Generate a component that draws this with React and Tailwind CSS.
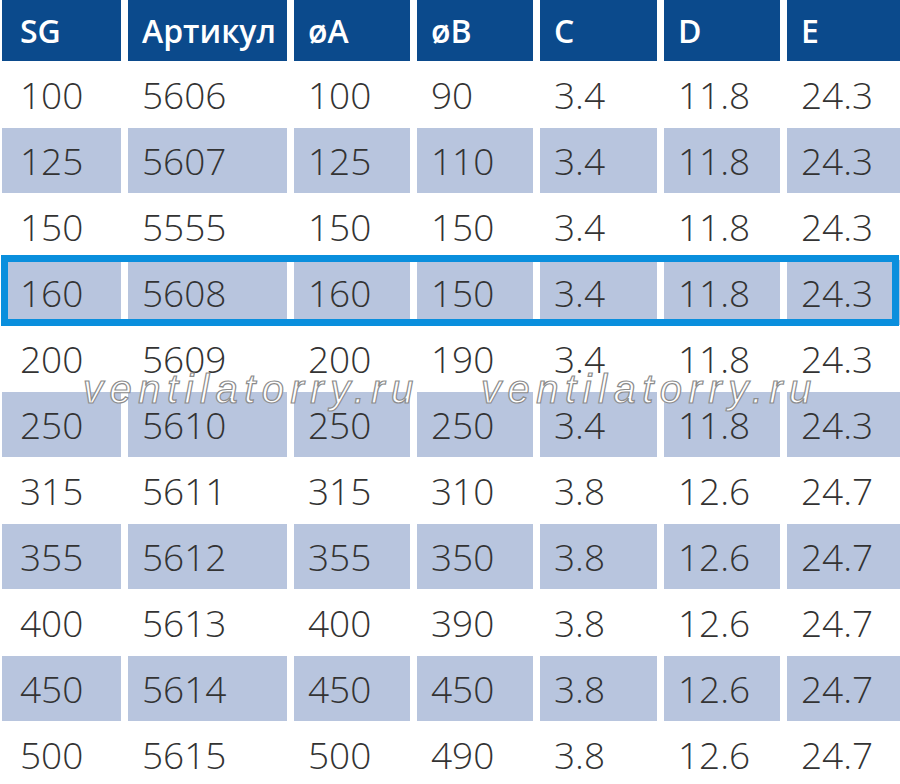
const HEAD = ["SG", "Артикул", "øA", "øB", "C", "D", "E"];

const ROWS = [
  ["100", "5606", "100", "90", "3.4", "11.8", "24.3"],
  ["125", "5607", "125", "110", "3.4", "11.8", "24.3"],
  ["150", "5555", "150", "150", "3.4", "11.8", "24.3"],
  ["160", "5608", "160", "150", "3.4", "11.8", "24.3"],
  ["200", "5609", "200", "190", "3.4", "11.8", "24.3"],
  ["250", "5610", "250", "250", "3.4", "11.8", "24.3"],
  ["315", "5611", "315", "310", "3.8", "12.6", "24.7"],
  ["355", "5612", "355", "350", "3.8", "12.6", "24.7"],
  ["400", "5613", "400", "390", "3.8", "12.6", "24.7"],
  ["450", "5614", "450", "450", "3.8", "12.6", "24.7"],
  ["500", "5615", "500", "490", "3.8", "12.6", "24.7"],
];

// selected row gets the blue frame
const SELECTED = 3;

const cols = "grid grid-cols-[119px_159px_116px_116px_117px_116px_113px] gap-x-[7px] pl-[2px]";

function Watermark({ className }) {
  return (
    <span
      className={"absolute top-[369px] text-[40px] leading-none italic tracking-[6.5px] text-white pointer-events-none " + className}
      style={{ fontFamily: '"Liberation Sans", Arial, sans-serif', WebkitTextStroke: "1.2px #8c8c8c" }}
    >
      ventilatorry.ru
    </span>
  );
}

export default function App() {
  return (
    <div
      className="relative w-[900px] h-[784px] overflow-hidden bg-white"
      style={{ fontFamily: '"Open Sans", "Noto Sans", sans-serif' }}
    >
      <div className={cols + " h-[62px]"}>
        {HEAD.map((h, i) => (
          <div
            key={h}
            className={"bg-[#0b4a8c] text-white text-[32px] font-semibold flex items-center h-[61px] " + (i === 0 ? "pl-[18px]" : "pl-[14px]")}
          >
            {h}
          </div>
        ))}
      </div>

      {ROWS.map((r, ri) => (
        <div key={ri} className="relative">
          <div className={cols + " h-[66px]"}>
            {r.map((v, ci) => (
              <div
                key={ci}
                className={
                  "flex items-center text-[37px] font-light text-[#333] " +
                  (ri % 2 === 1 ? "bg-[#b8c5de] mb-px " : "") +
                  (ci === 0 ? "pl-[18px]" : "pl-[14px]")
                }
              >
                {v}
              </div>
            ))}
          </div>
          {ri === SELECTED && (
            <div className="absolute -top-[5px] left-px w-[898px] h-[71px] border-[7px] border-[#0a8fdd] pointer-events-none" />
          )}
        </div>
      ))}

      <Watermark className="left-[83px]" />
      <Watermark className="left-[481px]" />
    </div>
  );
}
